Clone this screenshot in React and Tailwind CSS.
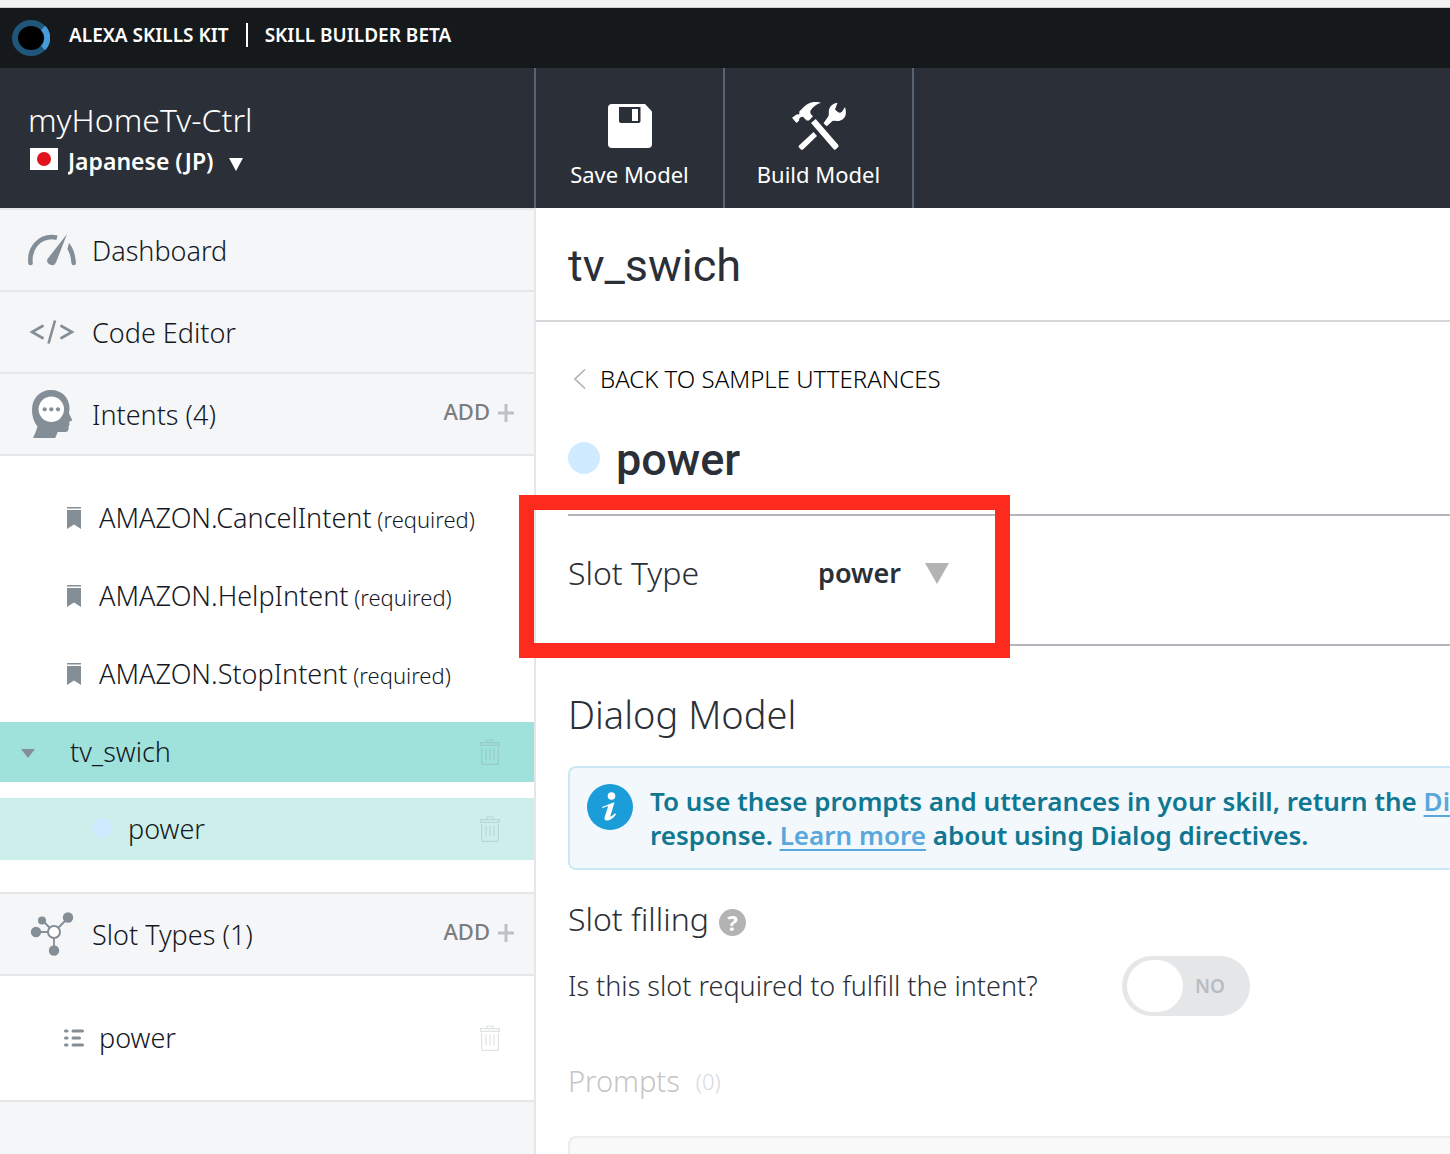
import React, { useState } from "react";

const intents = ["AMAZON.CancelIntent", "AMAZON.HelpIntent", "AMAZON.StopIntent"];

export default function App() {
  const [required, setRequired] = useState(false);

  return (
    <div className="min-h-screen flex flex-col overflow-x-clip bg-white font-['Noto_Sans',sans-serif] font-light text-[#16191f]">
      <div className="h-2 shrink-0 bg-[#f2f2f2] border-b border-[#cfcfcf]" />
      <TopBar />
      <Toolbar />

      <div className="flex flex-1">
        <Sidebar />

        <main className="flex-1 min-w-0 flex flex-col text-[#2b2f37]">
          <h1 className="h-[114px] shrink-0 flex items-center pt-1 pl-8 border-b-2 border-[#d5d7da] font-['Roboto',sans-serif] font-normal text-[45px]">
            tv_swich
          </h1>

          <div className="flex-1 flex flex-col pl-8">
            <a href="#utterances" className="mt-[37px] h-10 flex items-center text-[24px] text-black">
              <span className="w-8 flex pl-1.5">
                <svg width="12" height="20" viewBox="0 0 12 20" fill="none" stroke="#b3b3b3" strokeWidth="1.6">
                  <path d="M11 .5 1 10l10 9.5" />
                </svg>
              </span>
              BACK TO SAMPLE UTTERANCES
            </a>

            <div className="mt-[33px] mb-[26px] h-14 flex items-center gap-4">
              <span className="size-8 mb-1 rounded-full bg-[#d0eaff]" />
              <h2 className="font-['Roboto',sans-serif] font-medium text-[45px]">power</h2>
            </div>

            <section className="relative h-[132px] shrink-0 flex items-center pb-3.5 border-y-2 border-[#b3b7bd]">
              <label htmlFor="slot-type" className="w-[250px] text-[32px]">Slot Type</label>
              <select id="slot-type" className="appearance-none field-sizing-content bg-transparent font-semibold text-[27px]">
                <option>power</option>
              </select>
              <Triangle className="ml-6 w-6 h-[21px] text-[#b3b3b3] pointer-events-none" />
              {/* highlight frame */}
              <div className="absolute -top-[21px] -left-[49px] w-[491px] h-[163px] border-[15px] border-[#fd2a1e] pointer-events-none" />
            </section>

            <h3 className="mt-10 leading-[56px] text-[38px]">Dialog Model</h3>

            <div className="mt-6 flex gap-[17px] py-4 pl-[17px] border-2 border-r-0 border-[#cce7f5] rounded-l-lg bg-[#f3f8fd]">
              <InfoIcon />
              <p className="whitespace-nowrap font-semibold text-[26px] leading-[34px] text-[#107791]">
                To use these prompts and utterances in your skill, return the{" "}
                <a href="#directive" className="text-[#5aa7dc] underline decoration-2 underline-offset-4">Dialog</a>
                <br />
                response.{" "}
                <a href="#learn" className="text-[#5aa7dc] underline decoration-2 underline-offset-4">Learn more</a>
                {" "}about using Dialog directives.
              </p>
            </div>

            <div className="mt-7 h-[42px] flex items-center gap-2.5">
              <h4 className="text-[32px]">Slot filling</h4>
              <button aria-label="Help" className="size-[27px] mt-1.5 rounded-full bg-[#b3b3b3] text-white font-bold text-[22px] leading-[27px]">?</button>
            </div>

            <div className="mt-4 flex items-center">
              <label htmlFor="required" className="w-[554px] text-[27px]">Is this slot required to fulfill the intent?</label>
              <input
                id="required"
                type="checkbox"
                role="switch"
                className="sr-only"
                checked={required}
                onChange={(e) => setRequired(e.target.checked)}
              />
              <label htmlFor="required" className="w-32 h-[60px] flex items-center gap-3 pl-[5px] rounded-full bg-[#e5e6e8] font-semibold text-[19px] text-[#b7bcc3]">
                <span className="w-14 h-[52px] rounded-[27px] bg-white" />
                {required ? "YES" : "NO"}
              </label>
            </div>

            <div className="mt-[43px] h-11 flex items-center gap-4 text-[29px] text-[#c5c5c5]">
              Prompts
              <span className="text-[22px] text-[#d5d9de]">(0)</span>
            </div>
            <div className="mt-[33px] flex-1 border-2 border-r-0 border-b-0 border-[#ececec] rounded-tl-lg bg-[#f9f9f9]" />
          </div>
        </main>
      </div>
    </div>
  );
}

function TopBar() {
  return (
    <header className="h-[60px] shrink-0 flex items-center pl-3 bg-[#16191c] text-white">
      <svg width="38" height="36" viewBox="0 0 38 36" className="mr-[19px]">
        <ellipse cx="19" cy="18" rx="16" ry="15" fill="#000" stroke="#1f5679" strokeWidth="6" />
        <path d="M31 8a14 14 0 0 1 0 20" fill="none" stroke="#469bd8" strokeWidth="6" />
      </svg>
      <div className="mb-1.5 flex items-center gap-[17px] font-semibold text-[19px] leading-6">
        ALEXA SKILLS KIT
        <span className="w-0.5 h-6 bg-white" />
        SKILL BUILDER BETA
      </div>
    </header>
  );
}

function Toolbar() {
  return (
    <div className="h-[140px] shrink-0 flex bg-[#2b2f37] text-white">
      <div className="w-[536px] shrink-0 pt-8 pl-7 border-r-2 border-[#566473]">
        <div className="text-[32px] leading-10">myHomeTv-Ctrl</div>
        <div className="mt-[5px] h-8 flex items-center">
          <span className="w-7 h-[22px] ml-0.5 mb-1 mr-2.5 flex items-center justify-center bg-white">
            <span className="size-3.5 rounded-full bg-[#e0131f]" />
          </span>
          <select aria-label="Language" className="appearance-none field-sizing-content bg-transparent font-semibold text-[23px]">
            <option>Japanese (JP)</option>
          </select>
          <Triangle className="ml-[15px] mt-1.5 w-3.5 h-[13px] pointer-events-none" />
        </div>
      </div>
      <ToolButton label="Save Model">
        <svg width="44" height="44" viewBox="0 0 44 44">
          <path fill="#fff" d="M4 0h33l7 7.500V40a4 4 0 0 1-4 4H4a4 4 0 0 1-4-4V4a4 4 0 0 1 4-4z" />
          <path fill="#2b2f37" d="M11 3h21.500v14a2 2 0 0 1-2 2H13a2 2 0 0 1-2-2z" />
          <path fill="#fff" d="M24 5h6v12h-6z" />
        </svg>
      </ToolButton>
      <ToolButton label="Build Model">
        <svg width="54" height="48" viewBox="0 0 54 48" fill="#fff">
          <path d="M29 .8C26 0 24 0 22 0c-4 .4-7 2-9.500 4.200L7.300 9.500v2.700l-2.800.3L0 15.700 4.500 21 7 18.700C6.800 16 8.500 14.700 11 14.700l3.500 3.800H17l4-4.200c-2.500-2-3.500-4-2.200-6C21 4.500 24.500 2.500 29 .8z" />
          <path d="M23.700 17 19 21l22.500 26q1 1 2 .4l2.700-2.400q.8-1 .1-2z" />
          <path d="M45.500.8C41 1.500 38 4 37 7.500c-.6 2.500.3 5-.6 6.800l-4.900 7 3.200 2.900 5.800-5.300c2.500-.8 4.500.5 7.200-.2 3.600-1 6.200-4 6.200-8 0-2.200-.3-4-.9-5.700L50 9.800c-1.500 1.500-3 1.200-4.500 0L43 7.500z" />
          <path d="M21.500 30 7 43.500q-.8 1 0 2l2 2.100q1 .8 2 0L25 34z" />
        </svg>
      </ToolButton>
    </div>
  );
}

function ToolButton({ label, children }) {
  return (
    <button className="w-[189px] pt-8 flex flex-col items-center border-r-2 border-[#566473] font-normal text-[22px] leading-8">
      <span className="h-[52px] mb-1.5 flex items-center">{children}</span>
      {label}
    </button>
  );
}

function Sidebar() {
  return (
    <nav className="w-[536px] shrink-0 border-r-2 border-t-2 border-[#e5e6e8] bg-[#f5f6f8] text-[27px]">
      <SideRow label="Dashboard" icon={
        <svg width="48" height="32" viewBox="0 0 48 32" fill="none" stroke="#848e97" strokeWidth="4.6">
          <path strokeLinecap="round" d="M2.500 29C1 14 11 3 24 3" />
          <path d="M23.500 3q3 0 5.500.7" />
          <path stroke="none" fill="#848e97" d="M39 0 28 28.500a4.600 4.600 0 0 1-8.500-3.500zM41 9q6 7 7 20a2.300 2.300 0 0 1-4.600 0q-.4-8-4-14z" />
        </svg>
      } />
      <SideRow label="Code Editor" icon={
        <svg width="48" height="24" viewBox="0 0 48 24" fill="none" stroke="#848e97" strokeWidth="2.600">
          <path d="M15.500 5.500 4 12l11.500 6.500M27 .5l-6.500 23M32.500 5.500 44 12l-11.500 6.500" />
        </svg>
      } />
      <SideRow label="Intents (4)" add icon={
        <svg width="40" height="48" viewBox="0 0 40 48" fill="#848e97">
          <path d="M19 0c11 0 18.500 8 18.500 18.500 0 2-.8 3.500-.3 5.500L40 29.500l-.5 1.500-2.300.8.300 3-1 1.700.2 2q-.3 3.500-3.500 3.500h-7.500l-2.500 6H1q3-6 4.500-11.500C1.500 31.500 0 25 0 20 0 8 8 0 19 0z" />
          <circle cx="19.300" cy="19.300" r="12.700" fill="#fff" />
          <circle cx="12.700" cy="19.300" r="2.100" />
          <circle cx="19.300" cy="19.300" r="2.100" />
          <circle cx="26" cy="19.300" r="2.100" />
        </svg>
      } />

      <ul className="bg-white py-8">
        {intents.map((name) => (
          <li key={name} className="h-[60px] mb-[18px] flex items-center pl-[67px]">
            <svg width="14" height="22" viewBox="0 0 14 22" fill="#848e97" className="mr-[18px]">
              <path d="M0 0h14v1.600H0zM0 3h14v19l-7-4.500L0 22z" />
            </svg>
            <a href="#intent" className="whitespace-pre">{name}<span className="text-[22px]"> (required)</span></a>
          </li>
        ))}
        <li className="h-[60px] mb-4 flex items-center pl-[21px] pr-[34px] bg-[#9fe1db]">
          <Triangle className="w-3.5 h-[9px] mt-0.5 mr-[35px] text-[#848e97]" />
          <a href="#tv_swich" className="flex-1">tv_swich</a>
          <TrashButton />
        </li>
        <li className="h-[62px] flex items-center pl-[92px] pr-[34px] bg-[#cdefec]">
          <span className="size-5 mr-4 mb-0.5 rounded-full bg-[#d0eaff]" />
          <a href="#slot" className="flex-1">power</a>
          <TrashButton />
        </li>
      </ul>

      <div className="border-t-2 border-[#e5e6e8]">
        <SideRow label="Slot Types (1)" add icon={
          <svg width="44" height="44" viewBox="0 0 44 44" fill="#848e97">
            <path stroke="#848e97" strokeWidth="1.800" fill="none" d="M6 20h12M12 8l8 8M38 6 28 16M24 26v12" />
            <circle cx="6" cy="20" r="5.200" />
            <circle cx="12" cy="8.500" r="4" />
            <circle cx="38" cy="5.500" r="5.200" />
            <circle cx="24" cy="38.500" r="5.200" />
            <circle cx="24" cy="20" r="6" fill="#fff" stroke="#848e97" strokeWidth="2" />
          </svg>
        } />
      </div>
      <ul className="bg-white py-8 border-b-2 border-[#e5e6e8]">
        <li className="h-[60px] flex items-center pl-16 pr-[34px]">
          <svg width="20" height="18" viewBox="0 0 20 18" stroke="#848e97" strokeWidth="3" strokeLinecap="round" className="mr-[15px]">
            <path d="M1.500 2h1.500M9 2h9.500M1.500 9h1.500M9 9h6.500M1.500 16h1.500M9 16h9.500" />
          </svg>
          <a href="#type" className="flex-1">power</a>
          <TrashButton />
        </li>
      </ul>
    </nav>
  );
}

function SideRow({ icon, label, add }) {
  return (
    <div className="h-[82px] flex items-center pl-7 pr-5 border-b-2 border-[#e5e6e8]">
      <span className="w-12 mr-4 flex justify-center">{icon}</span>
      <a href="#section" className="flex-1 pt-0.5">{label}</a>
      {add && (
        <button className="flex items-center gap-2 mb-1.5 font-medium text-[22px] text-[#7d7d7d]">
          ADD
          <svg width="16" height="18" viewBox="0 0 16 18" stroke="#bcc1c8" strokeWidth="3" className="mt-1">
            <path d="M0 9h16M8 0v18" />
          </svg>
        </button>
      )}
    </div>
  );
}

function TrashButton() {
  return (
    <button aria-label="Delete" className="text-[#848e97]/25">
      <svg width="20" height="26" viewBox="0 0 20 26" fill="none" stroke="currentColor" strokeWidth="1.200">
        <path d="M.6 3.600h18.800v2.800H.6zM7 3.600V1h6v2.600M1.600 8v15.400q0 2 2 2h12.800q2 0 2-2V8M6 9.500v11M10 9.500v11M14 9.500v11" />
      </svg>
    </button>
  );
}

function InfoIcon() {
  return (
    <svg width="46" height="46" viewBox="0 0 46 46" className="shrink-0" fill="#fff">
      <circle cx="23" cy="23" r="23" fill="#1b9dd9" />
      <circle cx="24.500" cy="12" r="3.800" />
      <path d="m15 23 11.500-4.600h1l-4 13c-.3 1.200.3 1.300 1 .8l3.600-3 .9 1.200c-3 4-6.500 6-9 6-2.500 0-2.800-2-2.200-4l3-9c.3-1-.2-1.200-1-.9L15.500 24z" />
    </svg>
  );
}

function Triangle({ className }) {
  return (
    <svg viewBox="0 0 10 10" preserveAspectRatio="none" fill="currentColor" className={className}>
      <path d="M0 0h10L5 10z" />
    </svg>
  );
}
